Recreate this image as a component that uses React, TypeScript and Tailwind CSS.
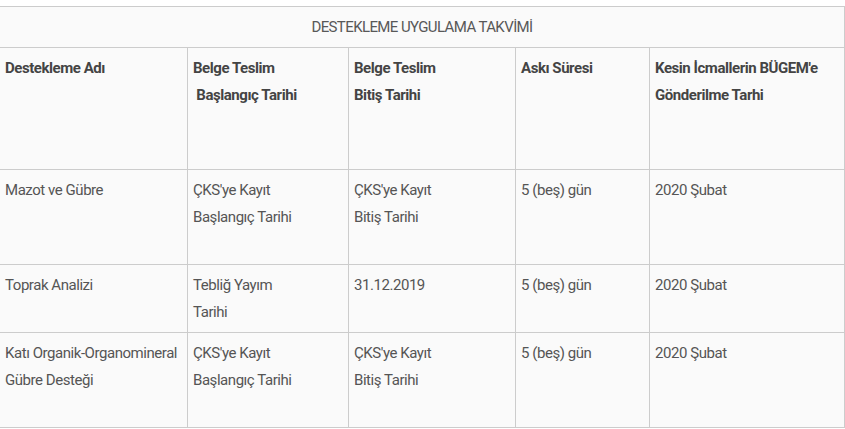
const headers = [
  ["Destekleme Adı"],
  ["Belge Teslim", "\u00a0Başlangıç Tarihi"],
  ["Belge Teslim", "Bitiş Tarihi"],
  ["Askı Süresi"],
  ["Kesin İcmallerin BÜGEM'e", "Gönderilme Tarhi"],
];

const rows: { h: string; cells: string[][] }[] = [
  {
    h: "h-[95px]",
    cells: [
      ["Mazot ve Gübre"],
      ["ÇKS'ye Kayıt", "Başlangıç Tarihi"],
      ["ÇKS'ye Kayıt", "Bitiş Tarihi"],
      ["5 (beş) gün"],
      ["2020 Şubat"],
    ],
  },
  {
    h: "h-[68px]",
    cells: [
      ["Toprak Analizi"],
      ["Tebliğ Yayım", "Tarihi"],
      ["31.12.2019"],
      ["5 (beş) gün"],
      ["2020 Şubat"],
    ],
  },
  {
    h: "h-[95px]",
    cells: [
      ["Katı Organik-Organomineral", "Gübre Desteği"],
      ["ÇKS'ye Kayıt", "Başlangıç Tarihi"],
      ["ÇKS'ye Kayıt", "Bitiş Tarihi"],
      ["5 (beş) gün"],
      ["2020 Şubat"],
    ],
  },
];

function Cell({ lines, bold, h }: { lines: string[]; bold?: boolean; h: string }) {
  return (
    <div
      className={`${h} border-r border-b border-[#cccccc] pl-[5px] pr-1 pt-[7px] leading-[27px] ${
        bold ? "font-bold text-[#444444]" : "text-[#555555]"
      }`}
    >
      {lines.map((l, i) => (
        <div key={i} className="whitespace-pre">{l}</div>
      ))}
    </div>
  );
}

export default function App() {
  return (
    <div className="min-h-screen bg-white pt-[6px] overflow-hidden font-['Roboto',sans-serif] text-[15px] tracking-[-0.45px]">
      <div className="ml-[-1px] w-[846px] border-t border-l border-[#cccccc] bg-[#fafafa]">
        <div className="flex h-[41px] items-center justify-center border-r border-b border-[#cccccc] text-[#585858] tracking-[-0.6px]">
          DESTEKLEME UYGULAMA TAKVİMİ
        </div>
        <div className="grid grid-cols-[188px_161px_167px_134px_195px]">
          {headers.map((c, i) => (
            <Cell key={i} lines={c} bold h="h-[122px]" />
          ))}
          {rows.map((r, ri) =>
            r.cells.map((c, ci) => <Cell key={`${ri}-${ci}`} lines={c} h={r.h} />)
          )}
        </div>
      </div>
    </div>
  );
}
